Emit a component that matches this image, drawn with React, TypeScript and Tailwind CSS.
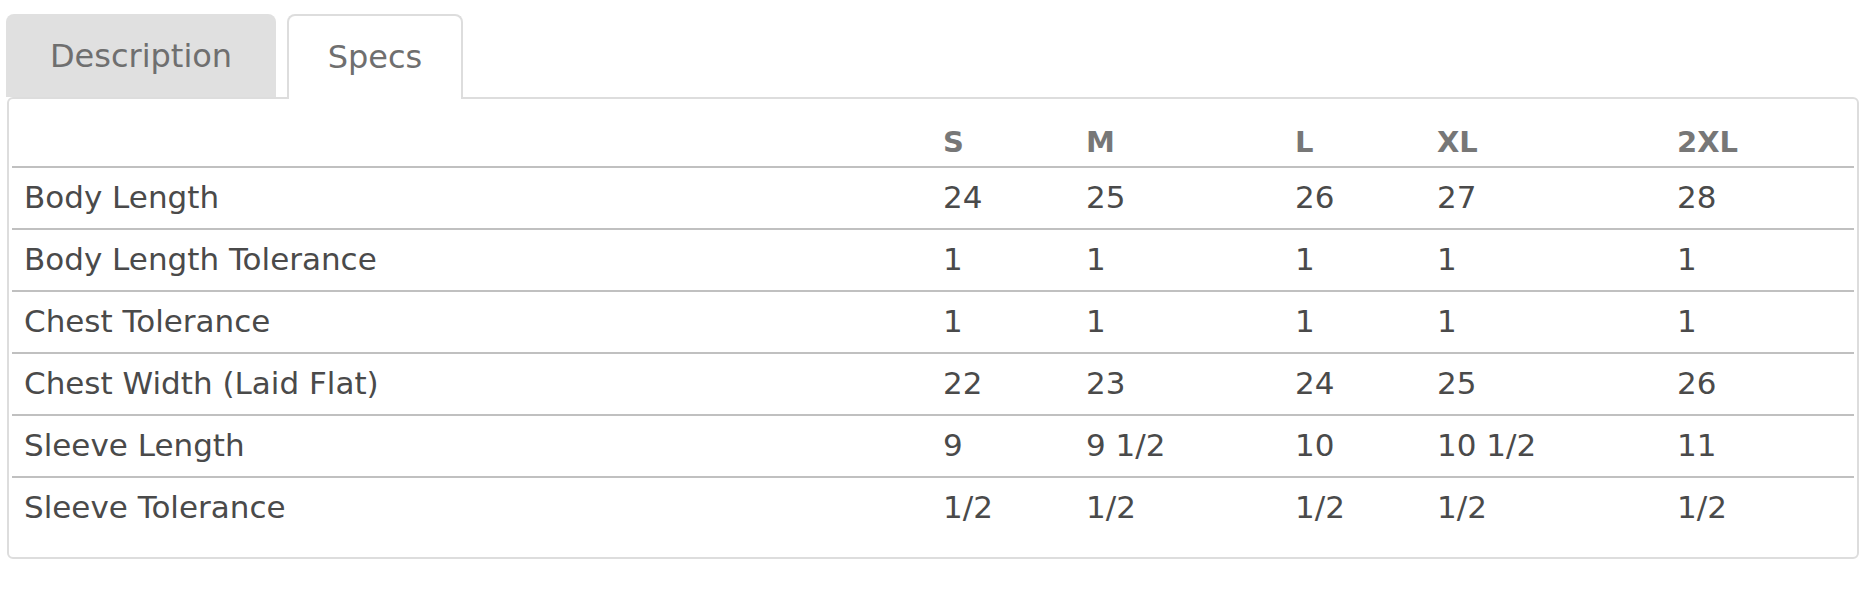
const sizes = ["S", "M", "L", "XL", "2XL"]

const rows: [string, string[]][] = [
  ["Body Length", ["24", "25", "26", "27", "28"]],
  ["Body Length Tolerance", ["1", "1", "1", "1", "1"]],
  ["Chest Tolerance", ["1", "1", "1", "1", "1"]],
  ["Chest Width (Laid Flat)", ["22", "23", "24", "25", "26"]],
  ["Sleeve Length", ["9", "9 1/2", "10", "10 1/2", "11"]],
  ["Sleeve Tolerance", ["1/2", "1/2", "1/2", "1/2", "1/2"]],
]

const cols = "grid grid-cols-[919px_143px_209px_142px_240px_1fr]"

export default function App() {
  return (
    <div
      className="w-full h-[616px] bg-white pt-[14px] pl-[6px] pr-[15px]"
      style={{ fontFamily: '"DejaVu Sans", sans-serif' }}
    >
      {/* Tabs */}
      <div className="flex gap-[11px] relative z-10">
        <button className="w-[270px] h-[83px] bg-[#e0e0e0] rounded-t-[8px] text-[32px] text-[#6f6f6f] leading-[32px]">
          Description
        </button>
        <button className="w-[176px] h-[85px] -mb-[2px] bg-white border-2 border-b-0 border-[#dddddd] rounded-t-[8px] text-[32px] text-[#6f6f6f] leading-[32px] pb-[2px]">
          Specs
        </button>
      </div>

      {/* Panel */}
      <div className="ml-[1px] border-2 border-[#dddddd] rounded-[6px] px-[3px] pb-[19px]">
        <div className={`${cols} h-[67px] items-end pb-[9px] text-[29px] leading-[30px] font-bold text-[#777777]`}>
          <div />
          {sizes.map((s) => (
            <div key={s} className="pl-[12px]">
              {s}
            </div>
          ))}
        </div>
        {rows.map(([label, vals]) => (
          <div
            key={label}
            className={`${cols} h-[62px] items-center border-t-2 border-[#c0c0c0] text-[31px] leading-[30px] text-[#4a4a4a]`}
          >
            <div className="pl-[12px] -mt-[2px]">{label}</div>
            {vals.map((v, i) => (
              <div key={i} className="pl-[12px] -mt-[2px]">
                {v}
              </div>
            ))}
          </div>
        ))}
      </div>
    </div>
  )
}
